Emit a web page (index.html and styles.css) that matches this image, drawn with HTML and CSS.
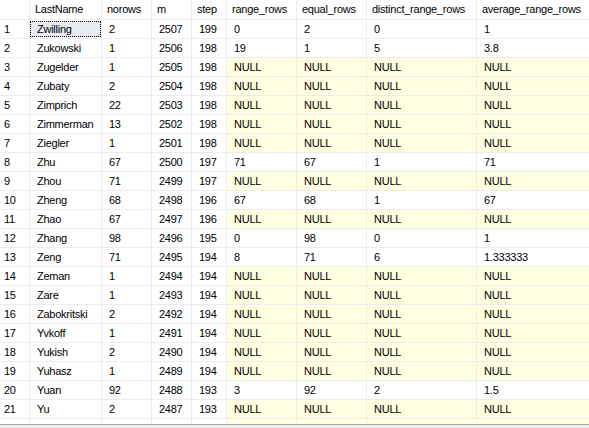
FILE: index.html
```html
<!DOCTYPE html>
<html>
<head>
<meta charset="utf-8">
<link rel="stylesheet" href="styles.css">
</head>
<body>
<div class="results">
  <div class="grid">
    <div class="hd rn"></div><div class="hd">LastName</div><div class="hd">norows</div><div class="hd">m</div><div class="hd">step</div><div class="hd">range_rows</div><div class="hd">equal_rows</div><div class="hd">distinct_range_rows</div><div class="hd">average_range_rows</div>

    <div class="rn">1</div><div class="c focus"><span class="fr">Zwilling</span></div><div class="c">2</div><div class="c">2507</div><div class="c">199</div><div class="c">0</div><div class="c">2</div><div class="c">0</div><div class="c">1</div>
    <div class="rn">2</div><div class="c">Zukowski</div><div class="c">1</div><div class="c">2506</div><div class="c">198</div><div class="c">19</div><div class="c">1</div><div class="c">5</div><div class="c">3.8</div>
    <div class="rn">3</div><div class="c">Zugelder</div><div class="c">1</div><div class="c">2505</div><div class="c">198</div><div class="c n">NULL</div><div class="c n">NULL</div><div class="c n">NULL</div><div class="c n">NULL</div>
    <div class="rn">4</div><div class="c">Zubaty</div><div class="c">2</div><div class="c">2504</div><div class="c">198</div><div class="c n">NULL</div><div class="c n">NULL</div><div class="c n">NULL</div><div class="c n">NULL</div>
    <div class="rn">5</div><div class="c">Zimprich</div><div class="c">22</div><div class="c">2503</div><div class="c">198</div><div class="c n">NULL</div><div class="c n">NULL</div><div class="c n">NULL</div><div class="c n">NULL</div>
    <div class="rn">6</div><div class="c">Zimmerman</div><div class="c">13</div><div class="c">2502</div><div class="c">198</div><div class="c n">NULL</div><div class="c n">NULL</div><div class="c n">NULL</div><div class="c n">NULL</div>
    <div class="rn">7</div><div class="c">Ziegler</div><div class="c">1</div><div class="c">2501</div><div class="c">198</div><div class="c n">NULL</div><div class="c n">NULL</div><div class="c n">NULL</div><div class="c n">NULL</div>
    <div class="rn">8</div><div class="c">Zhu</div><div class="c">67</div><div class="c">2500</div><div class="c">197</div><div class="c">71</div><div class="c">67</div><div class="c">1</div><div class="c">71</div>
    <div class="rn">9</div><div class="c">Zhou</div><div class="c">71</div><div class="c">2499</div><div class="c">197</div><div class="c n">NULL</div><div class="c n">NULL</div><div class="c n">NULL</div><div class="c n">NULL</div>
    <div class="rn">10</div><div class="c">Zheng</div><div class="c">68</div><div class="c">2498</div><div class="c">196</div><div class="c">67</div><div class="c">68</div><div class="c">1</div><div class="c">67</div>
    <div class="rn">11</div><div class="c">Zhao</div><div class="c">67</div><div class="c">2497</div><div class="c">196</div><div class="c n">NULL</div><div class="c n">NULL</div><div class="c n">NULL</div><div class="c n">NULL</div>
    <div class="rn">12</div><div class="c">Zhang</div><div class="c">98</div><div class="c">2496</div><div class="c">195</div><div class="c">0</div><div class="c">98</div><div class="c">0</div><div class="c">1</div>
    <div class="rn">13</div><div class="c">Zeng</div><div class="c">71</div><div class="c">2495</div><div class="c">194</div><div class="c">8</div><div class="c">71</div><div class="c">6</div><div class="c">1.333333</div>
    <div class="rn">14</div><div class="c">Zeman</div><div class="c">1</div><div class="c">2494</div><div class="c">194</div><div class="c n">NULL</div><div class="c n">NULL</div><div class="c n">NULL</div><div class="c n">NULL</div>
    <div class="rn">15</div><div class="c">Zare</div><div class="c">1</div><div class="c">2493</div><div class="c">194</div><div class="c n">NULL</div><div class="c n">NULL</div><div class="c n">NULL</div><div class="c n">NULL</div>
    <div class="rn">16</div><div class="c">Zabokritski</div><div class="c">2</div><div class="c">2492</div><div class="c">194</div><div class="c n">NULL</div><div class="c n">NULL</div><div class="c n">NULL</div><div class="c n">NULL</div>
    <div class="rn">17</div><div class="c">Yvkoff</div><div class="c">1</div><div class="c">2491</div><div class="c">194</div><div class="c n">NULL</div><div class="c n">NULL</div><div class="c n">NULL</div><div class="c n">NULL</div>
    <div class="rn">18</div><div class="c">Yukish</div><div class="c">2</div><div class="c">2490</div><div class="c">194</div><div class="c n">NULL</div><div class="c n">NULL</div><div class="c n">NULL</div><div class="c n">NULL</div>
    <div class="rn">19</div><div class="c">Yuhasz</div><div class="c">1</div><div class="c">2489</div><div class="c">194</div><div class="c n">NULL</div><div class="c n">NULL</div><div class="c n">NULL</div><div class="c n">NULL</div>
    <div class="rn">20</div><div class="c">Yuan</div><div class="c">92</div><div class="c">2488</div><div class="c">193</div><div class="c">3</div><div class="c">92</div><div class="c">2</div><div class="c">1.5</div>
    <div class="rn">21</div><div class="c">Yu</div><div class="c">2</div><div class="c">2487</div><div class="c">193</div><div class="c n">NULL</div><div class="c n">NULL</div><div class="c n">NULL</div><div class="c n">NULL</div>
    <div class="rn"></div><div class="c"></div><div class="c"></div><div class="c"></div><div class="c"></div><div class="c n"></div><div class="c n"></div><div class="c n"></div><div class="c n"></div>
  </div>
  <div class="hscroll"></div>
</div>
</body>
</html>
```

FILE: styles.css
```css
html, body {
  margin: 0;
  padding: 0;
  background: #ffffff;
}

.results {
  width: 589px;
  height: 428px;
  overflow: hidden;
  font-family: "Liberation Sans", Arial, sans-serif;
  font-size: 11px;
  letter-spacing: -0.25px;
  color: #000000;
}

.grid {
  display: grid;
  grid-template-columns: 29px 71px 49px 39px 34px 69px 69px 109px 1fr;
  grid-auto-rows: 18px;
  grid-template-rows: 19px;
  gap: 1px;
  background: #ececec;
  height: 424px;
  overflow: hidden;
}

.grid > div {
  background: #ffffff;
  line-height: 18px;
  white-space: nowrap;
  overflow: hidden;
}

.grid > .hd {
  line-height: 19px;
  padding-left: 5px;
}

.grid > .rn {
  padding-left: 4px;
}

.grid > .c {
  padding-left: 7px;
}

.grid > .n {
  background: #ffffe1;
}

.grid > .focus {
  padding: 1px 0 0 0;
  background: #ffffff;
}

.fr {
  display: block;
  height: 16px;
  line-height: 14px;
  padding-left: 6px;
  background: #e8ecf0;
  border: 1px dotted #000000;
  box-sizing: border-box;
}

.hscroll {
  height: 4px;
  border-top: 1px solid #a8a8a8;
  background: #f0f0f0;
}
```
